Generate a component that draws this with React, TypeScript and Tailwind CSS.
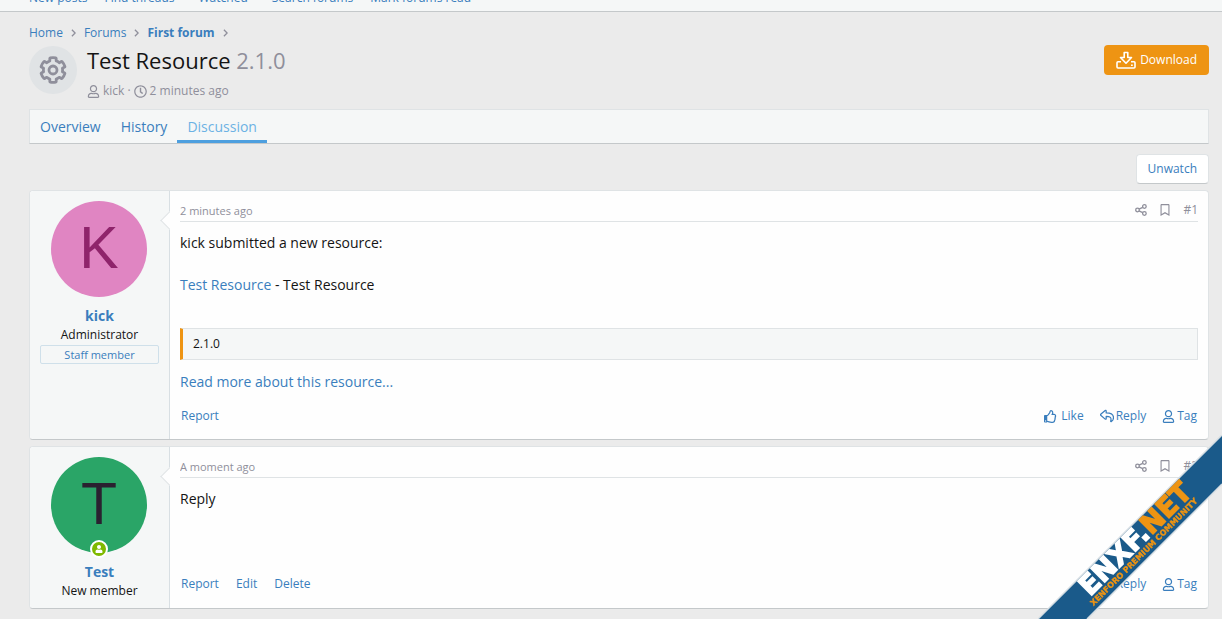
import type { ReactNode } from "react";
import { FaRegBookmark, FaRegClock, FaRegThumbsUp, FaRegUser, FaUser } from "react-icons/fa";

const link = "text-[#3a7ebd] hover:underline";

function Outline({ d, box = "0 0 512 512", className, width = 48 }: { d: string; box?: string; className: string; width?: number }) {
  return (
    <svg viewBox={box} className={className} fill="none" stroke="currentColor" strokeWidth={width} strokeLinejoin="round" aria-hidden="true">
      <path d={d} />
    </svg>
  );
}

const cogPath =
  "M487.4 315.7l-42.6-24.6c4.3-23.2 4.3-47 0-70.2l42.6-24.6c4.9-2.8 7.1-8.6 5.5-14-11.1-35.6-30-67.8-54.7-94.6-3.8-4.1-10-5.1-14.8-2.3L380.8 110c-17.9-15.4-38.5-27.3-60.8-35.1V25.800c0-5.600-3.900-10.500-9.400-11.700-36.700-8.200-74.300-7.800-109.200 0-5.500 1.200-9.400 6.100-9.400 11.700V75c-22.200 7.900-42.800 19.800-60.800 35.100L88.700 85.500c-4.900-2.800-11-1.900-14.800 2.300-24.700 26.700-43.600 58.900-54.700 94.600-1.700 5.400.6 11.200 5.500 14L67.300 221c-4.300 23.200-4.300 47 0 70.200l-42.600 24.600c-4.900 2.800-7.100 8.600-5.500 14 11.100 35.600 30 67.800 54.700 94.600 3.800 4.100 10 5.100 14.800 2.300l42.600-24.600c17.900 15.400 38.500 27.300 60.800 35.100v49.200c0 5.600 3.900 10.500 9.400 11.700 36.700 8.200 74.300 7.800 109.200 0 5.500-1.200 9.400-6.100 9.400-11.700v-49.200c22.200-7.900 42.800-19.800 60.800-35.100l42.600 24.600c4.900 2.800 11 1.900 14.800-2.300 24.700-26.700 43.600-58.900 54.700-94.600 1.500-5.500-.7-11.300-5.600-14.100zM256 336c-44.100 0-80-35.900-80-80s35.900-80 80-80 80 35.900 80 80-35.900 80-80 80z";
const replyPath =
  "M8.309 189.836L184.313 37.851C199.719 24.546 224 35.347 224 56.015v80.053c160.629 1.839 288 34.032 288 186.258 0 61.441-39.581 122.309-83.333 154.132-13.653 9.931-33.111-2.533-28.077-18.631 45.344-145.012-21.507-183.510-176.590-185.742V360c0 20.700-24.300 31.453-39.687 18.164l-176.004-152c-11.071-9.562-11.086-26.753 0-36.328z";

function DownloadIcon() {
  return (
    <svg viewBox="0 0 20 18" className="h-[18px] w-5" fill="none" stroke="currentColor" strokeWidth="1.6" strokeLinejoin="round" aria-hidden="true">
      <path d="M8.200 1.500h3.600v5h3.700L10 12.200 4.500 6.500h3.700z" />
      <path d="M5 10.800H2a1 1 0 0 0-1 1V16a1 1 0 0 0 1 1h16a1 1 0 0 0 1-1v-4.200a1 1 0 0 0-1-1h-3" />
      <path d="M15 14.200h1.800" />
    </svg>
  );
}

function ShareIcon() {
  return (
    <svg viewBox="0 0 12 12" className="size-3" fill="none" stroke="currentColor" strokeWidth="1.300" aria-hidden="true">
      <circle cx="2.500" cy="6" r="1.800" />
      <circle cx="9.400" cy="2.500" r="1.800" />
      <circle cx="9.400" cy="9.500" r="1.800" />
      <path d="M4 5.200l3.700-1.900M4 6.800l3.700 1.900" />
    </svg>
  );
}

function Chevron() {
  return (
    <svg viewBox="0 0 6 10" className="h-2 w-[5px] text-[#8f8f9b]" fill="none" stroke="currentColor" strokeWidth="1.600" aria-hidden="true">
      <path d="M1 1l4 4-4 4" />
    </svg>
  );
}

type PostProps = {
  name: string;
  title: string;
  staff?: boolean;
  online?: boolean;
  avatar: string;
  time: string;
  number: string;
  like?: boolean;
  own?: boolean;
  bodyClass: string;
  children: ReactNode;
};

function Post({ name, title, staff, online, avatar, time, number, like, own, bodyClass, children }: PostProps) {
  return (
    <article className="flex rounded border border-[#dfe3e5] border-b-[#c4c8ca] bg-[#fefefe]">
      <div className="relative w-[140px] shrink-0 rounded-l border-r border-[#d8dfe3] bg-[#f5f7f7] px-2.5 pt-2.5 pb-2 text-center">
        <span className="absolute top-[23px] -right-[7px] size-[13px] rotate-45 border-b border-l border-[#dfe3e5] bg-[#fefefe]" />
        <span className="absolute top-2.5 -right-[11px] h-10 w-2.5 bg-[#fefefe]" />
        <div className="relative ml-[11px] size-24">
          <a href="#member" className={`flex size-24 items-center justify-center rounded-full pb-0.5 font-['Liberation_Sans',sans-serif] text-[59px] leading-none ${avatar}`}>
            {name[0].toUpperCase()}
          </a>
          {online && (
            <span className="absolute -bottom-[5px] left-[39px] flex size-[18px] items-center justify-center rounded-full border-2 border-white bg-[#7fb900] text-white">
              <FaUser className="size-2" />
            </span>
          )}
        </div>
        <h4 className="mt-[9px] text-[14px] leading-5 font-bold">
          <a href="#member" className={link}>{name}</a>
        </h4>
        <h5 className="text-[12px] leading-[18px]">{title}</h5>
        {staff && <div className="mt-px rounded-xs border border-[#cfe0ea] text-[11px] leading-[17px] text-[#3a7ebd]">Staff member</div>}
      </div>
      <div className="flex min-w-0 flex-1 flex-col px-2.5 pt-2.5 pb-[13px]">
        <header className="flex h-[21px] items-center justify-between border-b border-[#dfe3e5] text-[11px] text-[#8f8f9b]">
          <time>{time}</time>
          <div className="flex items-center gap-3 pb-[3px]">
            <button type="button" aria-label="Share"><ShareIcon /></button>
            <button type="button" aria-label="Bookmark"><FaRegBookmark className="size-3" /></button>
            <a href="#post" className="text-[12px] leading-4">{number}</a>
          </div>
        </header>
        <div className={`pt-2.5 text-[14px] leading-[21px] ${bodyClass}`}>{children}</div>
        <footer className="flex justify-between px-px text-[12px] leading-5 text-[#3a7ebd]">
          <div className="flex gap-[17px]">
            <a href="#report">Report</a>
            {own && <a href="#edit">Edit</a>}
            {own && <a href="#delete">Delete</a>}
          </div>
          <div className="flex gap-4">
            {like && (
              <a href="#like" className="flex items-center gap-1"><FaRegThumbsUp className="size-[13px]" />Like</a>
            )}
            <a href="#reply" className="flex items-center gap-0.5"><Outline d={replyPath} box="-20 0 552 512" className="size-[14px]" />Reply</a>
            <a href="#tag" className="flex items-center gap-0.5"><FaRegUser className="size-[13px]" />Tag</a>
          </div>
        </footer>
      </div>
    </article>
  );
}

function Ribbon() {
  return (
    <svg viewBox="0 0 184 184" className="pointer-events-none fixed right-0 bottom-0 size-[184px]" role="img" aria-label="ENXF.NET">
      <path d="M0 184L184 0V49L49 184z" fill="#1a5a8a" />
      <path d="M0 184L184 0M49 184L184 49" stroke="#d5dde2" strokeWidth="1.500" />
      <g transform="translate(52 162) rotate(-45)" fontWeight="900" fontFamily="'DejaVu Sans', sans-serif">
        <text fontSize="27" fill="#fff" stroke="#fff" strokeWidth="1.500">
          ENXF.<tspan fill="#ee9413" stroke="#ee9413">NET</tspan>
        </text>
        <text x="-4" y="9" fontSize="8" fill="#ee9413" stroke="#ee9413" strokeWidth="0.400">XENFORO PREMIUM COMMUNITY</text>
      </g>
    </svg>
  );
}

export default function App() {
  return (
    <div className="min-h-screen bg-[#ebebeb] font-['Open_Sans','Noto_Sans',sans-serif] text-[#141414]">
      <nav className="h-3 overflow-hidden border-b border-[#c4c8ca] bg-[#f5f7f7]">
        <div className="-mt-3 flex gap-[17px] px-[29px] text-[12px] leading-5 text-[#3a7ebd]">
          <a href="#new">New posts</a>
          <a href="#find">Find threads</a>
          <a href="#watched" className="mx-[7px]">Watched</a>
          <a href="#search">Search forums</a>
          <a href="#mark">Mark forums read</a>
        </div>
      </nav>
      <main className="pt-[11px] pr-[13px] pb-2 pl-[29px]">
        <nav className="flex items-center gap-2 text-[12px] leading-5">
          <a href="#home" className={link}>Home</a><Chevron />
          <a href="#forums" className={link}>Forums</a><Chevron />
          <a href="#first" className={`${link} font-bold`}>First forum</a><Chevron />
        </nav>
        <div className="mt-[3px] flex items-start">
          <div className="flex size-12 items-center justify-center rounded-full bg-[#e0e3e5] text-[#8f8f9b]">
            <Outline d={cogPath} box="-24 -24 560 560" className="size-7" width={56} />
          </div>
          <div className="ml-2.5 flex-1">
            <h1 className="text-[22px] leading-7">Test Resource <span className="text-[#8f8f9b]">2.1.0</span></h1>
            <div className="mt-[7px] flex items-center gap-[3px] text-[12px] leading-5 text-[#8f8f9b]">
              <FaRegUser className="size-[13px]" /><a href="#member">kick</a>·<FaRegClock className="size-[13px]" /><time>2 minutes ago</time>
            </div>
          </div>
          <a href="#download" className="-mt-px flex h-[30px] items-center gap-1 rounded bg-[#ee9413] px-3 text-[12px] text-white"><DownloadIcon />Download</a>
        </div>
        <nav className="mt-2 flex h-[35px] border border-[#dfe3e5] border-b-[#c4c8ca] bg-[#f5f7f7] text-[14px] leading-[33px] text-[#3a7ebd]">
          <a href="#overview" className="px-2.5">Overview</a>
          <a href="#history" className="px-2.5">History</a>
          <a href="#discussion" className="border-b-3 border-[#4d9fdf] px-2.5 text-[#6cb2e4]">Discussion</a>
        </nav>
        <div className="mt-2.5 mb-1.5 flex justify-end">
          <button type="button" className="h-[30px] rounded border border-[#dfe3e5] border-b-[#c4c8ca] bg-white px-[11px] text-[12px] text-[#3a7ebd]">Unwatch</button>
        </div>
        <div className="flex flex-col gap-1.5">
          <Post name="kick" title="Administrator" staff avatar="bg-[#e085c2] text-[#8f246b]" time="2 minutes ago" number="#1" like bodyClass="h-[184px]">
            <p>kick submitted a new resource:</p>
            <p className="mt-[21px]"><a href="#resource" className={link}>Test Resource</a> - Test Resource</p>
            <blockquote className="mt-[33px] border border-l-3 border-[#dfe3e5] border-l-[#ee9413] bg-[#f5f7f7] px-2.5 text-[12px] leading-[30px]">2.1.0</blockquote>
            <p className="mt-[11px]"><a href="#more" className={link}>Read more about this resource...</a></p>
          </Post>
          <Post name="Test" title="New member" online avatar="bg-[#2aa567] text-[#2a2130]" time="A moment ago" number="#2" own bodyClass="h-24">
            <p>Reply</p>
          </Post>
        </div>
      </main>
      <Ribbon />
    </div>
  );
}
